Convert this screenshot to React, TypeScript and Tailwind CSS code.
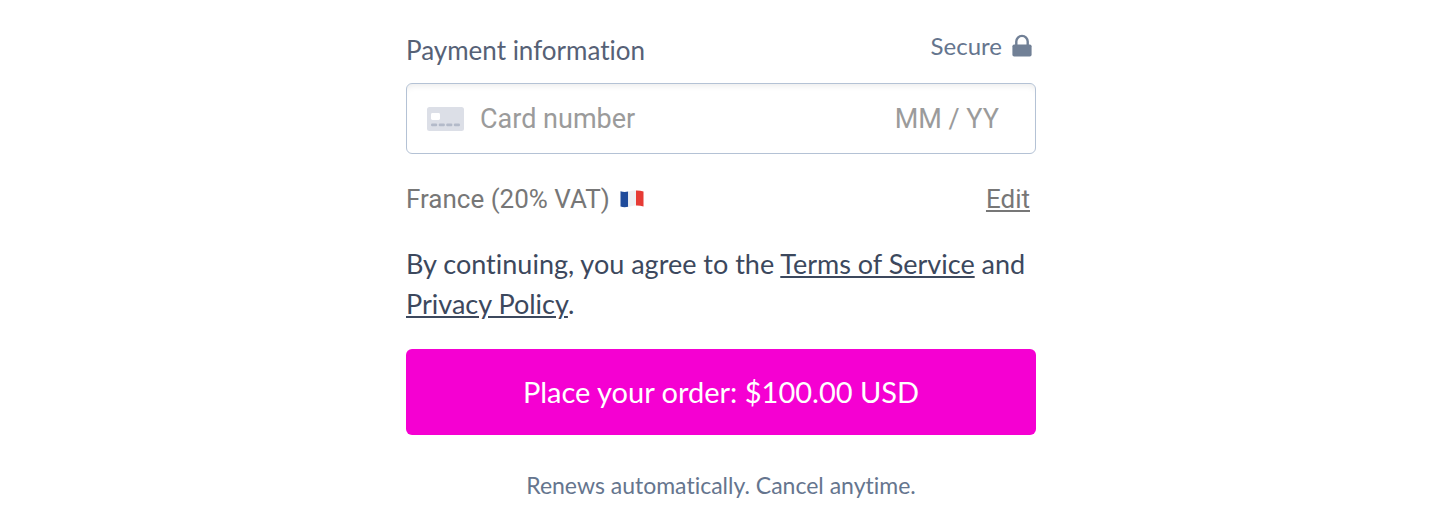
function LockIcon() {
  return (
    <svg className="w-5 h-6" viewBox="0 0 20 24" fill="none" aria-hidden="true">
      <path d="M4.3 12V7.6a5.7 5.7 0 0 1 11.4 0V12" stroke="#718096" strokeWidth="2.4" />
      <rect x="0.4" y="10.4" width="19.2" height="12.2" rx="1.8" fill="#718096" />
    </svg>
  );
}

function CardIcon() {
  return (
    <svg className="w-[37px] h-6 shrink-0" viewBox="0 0 37 24" aria-hidden="true">
      <rect width="37" height="24" rx="2.5" fill="#dcdfe7" />
      <rect x="4" y="6" width="9" height="7" rx="1.4" fill="#ffffff" />
      <g fill="#b3bac9">
        <rect x="4" y="16.6" width="6.2" height="2.6" rx="1.2" />
        <rect x="11.7" y="16.6" width="6.2" height="2.6" rx="1.2" />
        <rect x="19.2" y="16.6" width="6.2" height="2.6" rx="1.2" />
        <rect x="26.8" y="16.6" width="6.2" height="2.6" rx="1.2" />
      </g>
    </svg>
  );
}

function FranceFlag() {
  return (
    <svg className="w-6 h-[18px]" viewBox="0 0 24 18" role="img" aria-label="France">
      <path d="M0.5 1.2C3 2.2 5.5 2.2 8.2 1.6V16.8C5.5 17.5 3 17.4 0.5 16.6Z" fill="#1f4b9b" />
      <path d="M8.2 1.6C10.8 0.9 13.3 0.3 16 0.4V15.4C13.3 15.4 10.8 16.1 8.2 16.8Z" fill="#eef0f4" />
      <path d="M16 0.4C18.7 0.3 21.2 0.7 23.5 1.4V16.5C21.2 15.7 18.7 15.3 16 15.4Z" fill="#e63b35" />
    </svg>
  );
}

export default function App() {
  return (
    <main className="min-h-screen bg-white pl-0.5 font-['Lato',sans-serif] [font-variant-ligatures:none]">
      <form className="max-w-[630px] mx-auto pt-[30px] pb-6">
        <div className="flex justify-between items-start">
          <h2 className="text-[26px] leading-10 text-[#566176]">Payment information</h2>
          <p className="flex items-center gap-2.5 pr-1 text-[24px] leading-8 text-[#65758e]">
            Secure
            <LockIcon />
          </p>
        </div>

        <div className="flex items-center mt-[13px] h-[71px] pl-5 pr-9 rounded-md border border-[#b4c2d5] shadow-[inset_0_6px_6px_-4px_rgba(0,0,0,0.08)] font-['Roboto',sans-serif] text-[27px]">
          <CardIcon />
          <input
            className="flex-1 min-w-0 ml-4 pt-0.5 outline-none text-[#374151] placeholder:text-[#9b9b9b]"
            type="text"
            aria-label="Card number"
            placeholder="Card number"
          />
          <input
            className="w-32 pt-0.5 text-right outline-none text-[#374151] placeholder:text-[#9b9b9b]"
            type="text"
            aria-label="Expiry date"
            placeholder="MM / YY"
          />
        </div>

        <div className="flex justify-between mt-[25px] pr-1.5 font-['Roboto',sans-serif] text-[26px] leading-10 text-[#777777]">
          <p className="flex items-center gap-2.5">
            France (20% VAT)
            <FranceFlag />
          </p>
          <a href="#edit" className="underline">Edit</a>
        </div>

        <p className="mt-[25px] text-[27px] leading-10 text-[#3c485d]">
          By continuing, you agree to the{' '}
          <a href="#terms" className="underline">Terms of Service</a> and{' '}
          <a href="#privacy" className="underline">Privacy Policy</a>.
        </p>

        <button
          type="button"
          className="w-full mt-[25px] h-[86px] rounded-md bg-[#f500d2] text-[29px] text-white"
        >
          Place your order: $100.00 USD
        </button>

        <p className="mt-[30px] text-center text-[23px] leading-10 text-[#65758e]">
          Renews automatically. Cancel anytime.
        </p>
      </form>
    </main>
  );
}
